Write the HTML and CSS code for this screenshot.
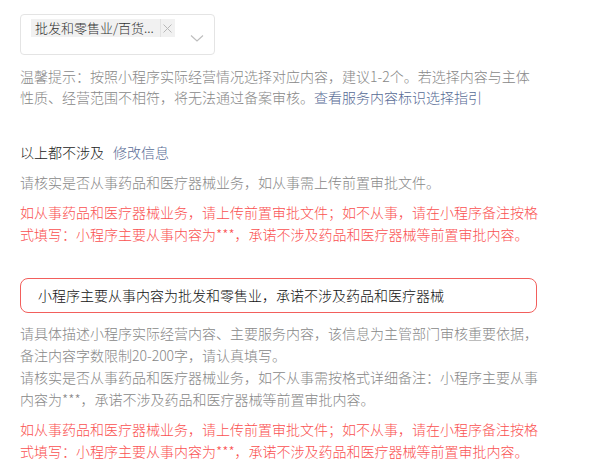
FILE: index.html
```html
<!DOCTYPE html>
<html>
<head>
  <meta charset="utf-8">
  <title>服务类目</title>
  <link rel="stylesheet" href="styles.css">
</head>
<body>

<div class="page">
  <!-- 类目选择 -->
  <div class="select">
    <span class="tag">
      <span class="tag-text">批发和零售业/百货...</span>
      <span class="tag-close">
        <svg width="9" height="9" viewBox="0 0 9 9"><path d="M0.5 0.5L8.5 8.5M8.5 0.5L0.5 8.5" stroke="#b8b8b8" stroke-width="1" fill="none"/></svg>
      </span>
    </span>
    <svg class="arrow" width="14" height="7" viewBox="0 0 14 7"><path d="M1 0.5L7 6L13 0.5" stroke="#bdbdbd" stroke-width="1.1" fill="none"/></svg>
  </div>

  <p class="tips">温馨提示：按照小程序实际经营情况选择对应内容，建议1-2个。若选择内容与主体性质、经营范围不相符，将无法通过备案审核。<a href="#">查看服务内容标识选择指引</a></p>

  <div class="check">以上都不涉及<a href="#">修改信息</a></div>
  <p class="desc">请核实是否从事药品和医疗器械业务，如从事需上传前置审批文件。</p>
  <p class="warn">如从事药品和医疗器械业务，请上传前置审批文件；如不从事，请在小程序备注按格式填写：小程序主要从事内容为***，承诺不涉及药品和医疗器械等前置审批内容。</p>

  <!-- 备注 -->
  <div class="remark">小程序主要从事内容为批发和零售业，承诺不涉及药品和医疗器械</div>
  <p class="desc first">请具体描述小程序实际经营内容、主要服务内容，该信息为主管部门审核重要依据，备注内容字数限制20-200字，请认真填写。</p>
  <p class="desc">请核实是否从事药品和医疗器械业务，如不从事需按格式详细备注：小程序主要从事内容为***，承诺不涉及药品和医疗器械等前置审批内容。</p>
  <p class="warn">如从事药品和医疗器械业务，请上传前置审批文件；如不从事，请在小程序备注按格式填写：小程序主要从事内容为***，承诺不涉及药品和医疗器械等前置审批内容。</p>
</div>

</body>
</html>
```

FILE: styles.css
```css
body {
  margin: 0;
  background: #fff;
  font-family: "Noto Sans CJK SC", "Microsoft YaHei", sans-serif;
  font-size: 14px;
  font-weight: 300;
  color: #888;
}
a {
  color: #576b95;
  text-decoration: none;
}
p {
  margin: 0;
}
.page {
  width: 520px;
  padding: 14px 20px;
}
.select {
  width: 195px;
  height: 41px;
  border: 1px solid #e4e4e4;
  border-radius: 4px;
  display: flex;
  align-items: flex-start;
  padding: 4px 8px 0 10px;
  box-sizing: border-box;
}
.tag {
  display: flex;
  align-items: center;
  height: 18px;
  background: #f1f1f1;
  color: #333;
  font-size: 13px;
  line-height: 18px;
}
.tag-text {
  padding: 0 6px 0 4px;
}
.tag-close {
  display: flex;
  align-items: center;
  justify-content: center;
  width: 14px;
  height: 18px;
  border-left: 1px solid #e2e2e2;
}
.arrow {
  margin-left: auto;
  margin-top: 16px;
  margin-right: 2px;
}
.tips {
  margin-top: 11px;
  line-height: 21px;
}
.check {
  margin-top: 33px;
  color: #222;
  line-height: 22px;
}
.check a {
  margin-left: 9px;
}
.desc {
  line-height: 22px;
  margin-top: 8px;
}
.warn {
  color: #fa5151;
  line-height: 22px;
  margin-top: 8px;
}
.remark {
  width: 517px;
  height: 35px;
  margin-top: 33px;
  box-sizing: border-box;
  border: 1px solid #f25f5c;
  border-radius: 8px;
  padding: 0 17px;
  line-height: 33px;
  color: #111;
}
.desc.first {
  margin-top: 9px;
}
.desc.first + .desc {
  margin-top: 0;
}
```
